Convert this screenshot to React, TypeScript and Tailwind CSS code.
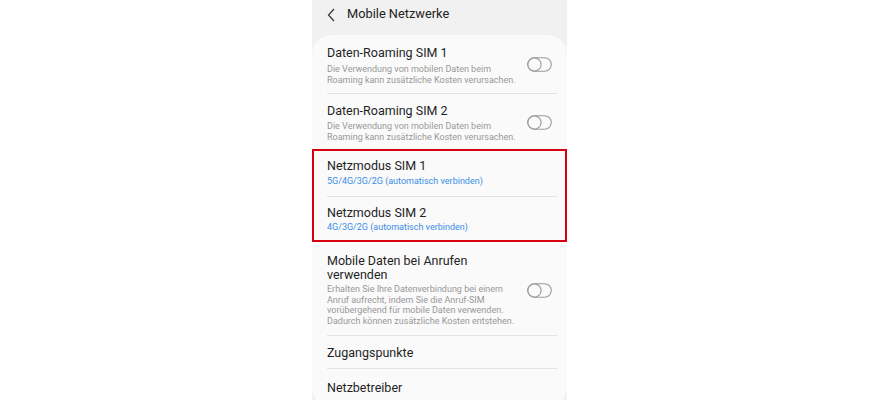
const Toggle = () => (
    <svg width="25" height="15" viewBox="0 0 25 15" className="shrink-0">
        <rect x="0.75" y="0.75" width="23.5" height="13.5" rx="6.75" fill="none" stroke="#9a9a9a" strokeWidth="1.1" />
        <circle cx="7.5" cy="7.5" r="6.6" fill="#fafafa" stroke="#9a9a9a" strokeWidth="1.1" />
    </svg>
)

const Divider = () => <div className="ml-[15px] mr-[10px] h-px bg-[#e4e4e4]"></div>

const App = () => {
    return (
        <div className="w-full h-[400px] bg-white flex justify-center overflow-hidden font-['Roboto',sans-serif]">
            <div className="w-[255px] bg-[#f1f1f1] flex flex-col">
                {/* header */}
                <div className="h-[35px] flex items-start pt-[6px] pl-[14px] shrink-0">
                    <svg width="12" height="16" viewBox="0 0 12 16" className="mt-[1px]">
                        <path d="M8 2 L2.5 8 L8 14" fill="none" stroke="#333" strokeWidth="1.2" />
                    </svg>
                    <span className="ml-[9px] text-[12.8px] leading-[16px] text-[#222]">Mobile Netzwerke</span>
                </div>

                <div className="bg-[#fafafa] rounded-[20px] flex flex-col">
                    {/* Daten-Roaming SIM 1 */}
                    <div className="flex items-center px-[15px] pt-[9px] pb-[8px]">
                        <div className="flex-1">
                            <div className="text-[12.5px] leading-[18px] text-[#1f1f1f]">Daten-Roaming SIM 1</div>
                            <div className="mt-[2px] text-[9px] leading-[10.5px] text-[#989898]">
                                Die Verwendung von mobilen Daten beim<br />Roaming kann zusätzliche Kosten verursachen.
                            </div>
                        </div>
                        <Toggle />
                    </div>
                    <Divider />

                    {/* Daten-Roaming SIM 2 */}
                    <div className="flex items-center px-[15px] pt-[8px] pb-[7px]">
                        <div className="flex-1">
                            <div className="text-[12.5px] leading-[18px] text-[#1f1f1f]">Daten-Roaming SIM 2</div>
                            <div className="mt-[1px] text-[9px] leading-[10.5px] text-[#989898]">
                                Die Verwendung von mobilen Daten beim<br />Roaming kann zusätzliche Kosten verursachen.
                            </div>
                        </div>
                        <Toggle />
                    </div>

                    {/* highlighted Netzmodus rows */}
                    <div className="border-2 border-[#d7000f]">
                        <div className="px-[13px] pt-[6px] pb-[9px]">
                            <div className="text-[12.5px] leading-[18px] text-[#1f1f1f]">Netzmodus SIM 1</div>
                            <div className="mt-[1px] text-[9px] leading-[11px] text-[#3a8ee6]">5G/4G/3G/2G (automatisch verbinden)</div>
                        </div>
                        <div className="ml-[13px] mr-[8px] h-px bg-[#e4e4e4]"></div>
                        <div className="px-[13px] pt-[7px] pb-[7px]">
                            <div className="text-[12.5px] leading-[18px] text-[#1f1f1f]">Netzmodus SIM 2</div>
                            <div className="text-[9px] leading-[11px] text-[#3a8ee6]">4G/3G/2G (automatisch verbinden)</div>
                        </div>
                    </div>

                    {/* Mobile Daten bei Anrufen */}
                    <div className="flex items-center px-[15px] pt-[12px] pb-[9px]">
                        <div className="flex-1">
                            <div className="text-[12.5px] leading-[14px] text-[#1f1f1f]">Mobile Daten bei Anrufen<br />verwenden</div>
                            <div className="mt-[2px] text-[9px] leading-[10.5px] text-[#989898]">
                                Erhalten Sie Ihre Datenverbindung bei einem<br />Anruf aufrecht, indem Sie die Anruf-SIM<br />vorübergehend für mobile Daten verwenden.<br />Dadurch können zusätzliche Kosten entstehen.
                            </div>
                        </div>
                        <Toggle />
                    </div>
                    <Divider />

                    <div className="px-[15px] pt-[8px] pb-[6px] text-[12.5px] leading-[18px] text-[#1f1f1f]">Zugangspunkte</div>
                    <Divider />

                    <div className="px-[15px] pt-[10px] pb-[10px] text-[12.5px] leading-[18px] text-[#1f1f1f]">Netzbetreiber</div>
                </div>
            </div>
        </div>
    )
}

export default App
